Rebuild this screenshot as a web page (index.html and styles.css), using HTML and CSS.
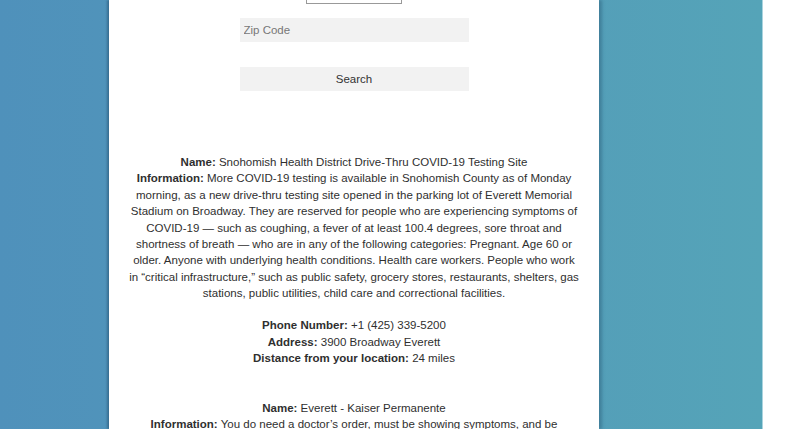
FILE: index.html
```html
<!DOCTYPE html>
<html>
<head>
<meta charset="utf-8">
<link rel="stylesheet" href="styles.css">
</head>
<body>
<div class="bg">
  <div class="panel">
    <form class="search">
      <select class="state"><option>State</option></select>
      <input class="zip" type="text" placeholder="Zip Code">
      <button class="btn" type="button">Search</button>
    </form>
    <div class="results">
      <div class="site">
        <p><b>Name:</b> Snohomish Health District Drive-Thru COVID-19 Testing Site<br>
        <b>Information:</b> More COVID-19 testing is available in Snohomish County as of Monday morning, as a new drive-thru testing site opened in the parking lot of Everett Memorial Stadium on Broadway. They are reserved for people who are experiencing symptoms of COVID-19 — such as coughing, a fever of at least 100.4 degrees, sore throat and shortness of breath — who are in any of the following categories: Pregnant. Age 60 or older. Anyone with underlying health conditions. Health care workers. People who work in “critical infrastructure,” such as public safety, grocery stores, restaurants, shelters, gas stations, public utilities, child care and correctional facilities.</p>
        <p><b>Phone Number:</b> +1 (425) 339-5200<br>
        <b>Address:</b> 3900 Broadway Everett<br>
        <b>Distance from your location:</b> 24 miles</p>
      </div>
      <div class="site">
        <p><b>Name:</b> Everett - Kaiser Permanente<br>
        <b>Information:</b> You do need a doctor’s order, must be showing symptoms, and be referred by a health care provider before going to the testing site.</p>
      </div>
    </div>
  </div>
</div>
</body>
</html>
```

FILE: styles.css
```css
html, body {
  margin: 0;
  padding: 0;
  height: 100%;
  overflow: hidden;
  background: #ffffff;
}
body {
  font-family: "Liberation Sans", Arial, sans-serif;
  color: #2f2f2f;
}
.bg {
  display: flow-root;
  width: 763px;
  height: 100%;
  padding-left: 109px;
  box-sizing: border-box;
  background: linear-gradient(to right, #4f91bb 0%, #5399b9 50%, #55a4b8 100%);
  border-right: 1px solid #a9d3de;
}
.panel {
  display: flow-root;
  width: 490px;
  height: 100%;
  background: #ffffff;
  box-shadow: -2px 0 2px rgba(30, 70, 100, 0.45), 3px 0 3px rgba(30, 70, 100, 0.35);
  padding: 0 20px;
  box-sizing: border-box;
}
.search {
  display: flex;
  flex-direction: column;
  align-items: center;
  margin-top: -14px;
}
.state {
  width: 96px;
  height: 18px;
  font-family: "Liberation Sans", Arial, sans-serif;
  font-size: 11.5px;
  border: 1px solid #999;
  background: #fff;
  color: #333;
  padding: 0 2px;
  margin-left: -1px;
}
.zip {
  margin-top: 14px;
  width: 229px;
  height: 24px;
  box-sizing: border-box;
  border: none;
  background: #f2f2f2;
  padding: 0 4px;
  font-family: "Liberation Sans", Arial, sans-serif;
  font-size: 11.5px;
  color: #333;
}
.zip::placeholder {
  color: #777;
}
.btn {
  margin-top: 25px;
  width: 229px;
  height: 24px;
  border: none;
  background: #f2f2f2;
  font-family: "Liberation Sans", Arial, sans-serif;
  font-size: 11.5px;
  color: #333;
}
.results {
  margin-top: 63px;
  text-align: center;
  font-size: 11.5px;
  line-height: 16.4px;
}
.site {
  margin-bottom: 33.5px;
}
.site p {
  margin: 0 0 15.5px 0;
}
```
